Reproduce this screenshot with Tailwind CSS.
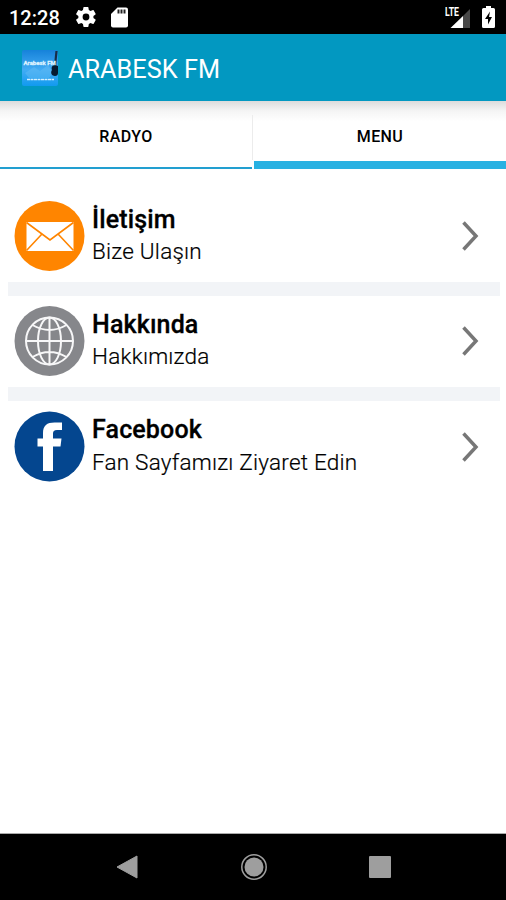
<!DOCTYPE html>
<html lang="tr">
<head>
<meta charset="utf-8">
<title>Arabesk FM</title>
<script src="https://cdn.jsdelivr.net/npm/@tailwindcss/browser@4"></script>
</head>
<body class="bg-white">
<div class="flex h-[900px] w-[506px] flex-col overflow-hidden bg-white font-['Roboto',sans-serif] text-black">
  <div class="flex h-[34px] shrink-0 items-center bg-black pl-[9px] pr-[11px] text-white">
    <span class="w-[67px] whitespace-nowrap pt-px text-[20px] leading-none font-medium">12:28</span>
    <svg class="h-6 w-[20px]" viewBox="2 0 20 24" fill="currentColor"><path fill-rule="evenodd" d="M19.4 13c.1-.6.1-1.400 0-2l2.100-1.600c.2-.2.200-.4.100-.6l-2-3.500c-.1-.2-.4-.3-.6-.2l-2.500 1c-.5-.4-1.100-.7-1.700-1l-.4-2.600c0-.3-.2-.5-.5-.5h-4c-.2 0-.4.200-.5.500L9 5.100c-.6.3-1.200.6-1.700 1l-2.500-1c-.2-.1-.5 0-.6.2l-2 3.500c-.1.200-.1.500.1.600L4.400 11c-.1.600-.1 1.400 0 2l-2.100 1.600c-.2.200-.2.400-.1.600l2 3.500c.1.200.4.300.6.200l2.500-1c.5.400 1.100.7 1.700 1l.4 2.600c.1.300.3.500.5.500h4c.3 0 .5-.2.500-.5l.4-2.600c.6-.3 1.200-.6 1.700-1l2.500 1c.2.100.5 0 .6-.2l2-3.500c.1-.2.100-.4-.1-.6zM12 15.400a3.400 3.400 0 1 1 0-6.800 3.400 3.400 0 0 1 0 6.800z"/></svg>
    <svg class="ml-[15px] h-[21px] w-[17px]" viewBox="0 0 17 21"><path fill="#fff" d="M6.500.5H15a2 2 0 0 1 2 2v16a2 2 0 0 1-2 2H2a2 2 0 0 1-2-2V7z"/><path fill="#222" d="M6.500 2.500h2v4h-2zM9.500 2.500h2v4h-2zM12.500 2.500h2v4h-2z"/></svg>
    <svg class="ml-auto h-[24px] w-[27px]" viewBox="0 0 27 24"><path fill="#484848" d="M25 4v19h-7V11z"/><path fill="#fff" d="M18 11v12H5.500z"/><text x="0" y="11" textLength="14" lengthAdjust="spacingAndGlyphs" font-family="Roboto" font-weight="700" font-size="12" fill="#fff">LTE</text></svg>
    <svg class="ml-[10px] h-[22px] w-[13px]" viewBox="0 0 13 22"><path fill="#fff" d="M4 0h5v2h2.500A1.500 1.500 0 0 1 13 3.500v17a1.500 1.500 0 0 1-1.500 1.500h-10A1.500 1.500 0 0 1 0 20.500v-17A1.500 1.500 0 0 1 1.500 2H4z"/><path fill="#000" d="M8 5.500 3 13h3v5.500L10 11H7z"/></svg>
  </div>

  <header class="flex h-[67px] shrink-0 items-center bg-[#0298c1] pl-[22px] text-white">
    <svg class="h-[36px] w-[36px]" viewBox="0 0 36 36">
      <defs><linearGradient id="logo" x2="0" y2="1"><stop stop-color="#1682da"/><stop offset=".55" stop-color="#42acf4"/><stop offset="1" stop-color="#119aef"/></linearGradient></defs>
      <rect width="36" height="36" rx="2" fill="url(#logo)"/>
      <path d="m3 23 9-6 6 4 8-6 5 8-4 5H7z" fill="#65bcf5" opacity=".45"/>
      <path d="M34.500 1 33 16" stroke="#172d48" stroke-width="2.200"/><path d="M33 15c-3 0-4 3-3 5-2 3 0 6 3 6 2 0 3-1 3-3v-7z" fill="#051a30"/>
      <text x="1.500" y="14.500" font-family="Roboto" font-weight="700" font-size="6" fill="#dcf2ff" stroke="#dcf2ff" stroke-width=".3">Arabesk FM</text>
      <path d="M5 29.500h27" stroke="#d6f0ff" stroke-width="1.500" stroke-dasharray="3 .5"/>
    </svg>
    <h1 class="ml-[10px] whitespace-nowrap pt-[5px] text-[25.300px] leading-none">ARABESK FM</h1>
  </header>

  <nav class="flex h-[68px] shrink-0 bg-linear-to-b from-[#dcdcdc] from-0% via-[#f5f5f5] via-15% to-white to-30% text-[16px] leading-none font-medium tracking-[0.400px]">
    <div class="flex w-[252px] justify-center border-b-2 border-[#229fd0] pt-[28px]">RADYO</div>
    <div class="mt-[14px] mr-px h-[45px] w-px bg-[#ececec]"></div>
    <div class="flex w-[252px] justify-center border-b-[8px] border-[#28b1e2] pt-[28px]">MENU</div>
  </nav>

  <main class="flex flex-1 flex-col pt-[22px] pr-[6px] pl-[8px]">
    <section class="flex h-[105px] shrink-0 items-start border-b-[14px] border-[#f2f4f7] pl-[6px]">
      <svg class="mt-[9px] h-[71px] w-[71px]" viewBox="0 0 71 71"><circle cx="35.500" cy="36" r="35" fill="#ff8500"/><rect x="12.500" y="22" width="47" height="29" fill="#fff"/><path d="m12.500 22.500 23.500 17.500L59.500 22.500M12.500 50.500l15-16M59.500 50.500l-15-16" fill="none" stroke="#ff8500" stroke-width="1.600"/></svg>
      <div class="ml-[7px] whitespace-nowrap pt-[14px]"><h2 class="text-[25px] leading-[30px] font-medium tracking-[0.150px] [-webkit-text-stroke:0.300px_black]">İletişim</h2><p class="text-[22.500px] leading-[33px] font-light tracking-[0.220px] [-webkit-text-stroke:0.200px_black]">Bize Ulaşın</p></div>
      <svg class="mt-[29px] mr-[21px] ml-auto h-[32px] w-[18px]" viewBox="0 0 18 32" fill="none" stroke="#777" stroke-width="3.500"><path d="m2.500 2.500 12.500 13.500L2.500 29.500"/></svg>
    </section>
    <section class="flex h-[105px] shrink-0 items-start border-b-[14px] border-[#f2f4f7] pl-[6px]">
      <svg class="mt-[9px] h-[71px] w-[71px]" viewBox="0 0 71 71"><circle cx="35.500" cy="36" r="35" fill="#86878b"/><g fill="none" stroke="#f7f7f8" stroke-width="2"><circle cx="35.500" cy="36" r="23.500"/><ellipse cx="35.500" cy="36" rx="11.500" ry="23.500"/><path d="M12 36h47M35.500 12.500v47M18.500 20q17 10 34 0M18.500 52q17-10 34 0"/></g></svg>
      <div class="ml-[7px] whitespace-nowrap pt-[14px]"><h2 class="text-[25px] leading-[30px] font-medium tracking-[0.150px] [-webkit-text-stroke:0.300px_black]">Hakkında</h2><p class="text-[22.500px] leading-[33px] font-light tracking-[0.220px] [-webkit-text-stroke:0.200px_black]">Hakkımızda</p></div>
      <svg class="mt-[29px] mr-[21px] ml-auto h-[32px] w-[18px]" viewBox="0 0 18 32" fill="none" stroke="#777" stroke-width="3.500"><path d="m2.500 2.500 12.500 13.500L2.500 29.500"/></svg>
    </section>
    <section class="flex h-[105px] shrink-0 items-start pl-[6px]">
      <svg class="mt-[10px] h-[71px] w-[71px]" viewBox="0 0 71 71"><circle cx="35.500" cy="35.500" r="35" fill="#04468f"/><path fill="#fff" d="M29 60V35.500h-5.500v-8H29V22c0-7.500 4-10.500 11.500-10.500H48V19h-5c-3 0-4 1.200-4 3.500v5h8.500l-1 8H39V60z"/></svg>
      <div class="ml-[7px] whitespace-nowrap pt-[14px]"><h2 class="text-[25px] leading-[30px] font-medium tracking-[0.150px] [-webkit-text-stroke:0.300px_black]">Facebook</h2><p class="pt-px text-[22.500px] leading-[33px] font-light tracking-[0.220px] [-webkit-text-stroke:0.200px_black]">Fan Sayfamızı Ziyaret Edin</p></div>
      <svg class="mt-[30px] mr-[21px] ml-auto h-[32px] w-[18px]" viewBox="0 0 18 32" fill="none" stroke="#777" stroke-width="3.500"><path d="m2.500 2.500 12.500 13.500L2.500 29.500"/></svg>
    </section>
  </main>

  <footer class="flex h-[67px] shrink-0 items-center justify-between border-t border-[#aaa] bg-black pr-[115px] pl-[116px]">
    <svg class="h-[26px] w-[22px]" viewBox="0 0 22 26" fill="#9e9e9e" stroke="#9e9e9e" stroke-linejoin="round"><path d="M21 2v22L1 13z"/></svg>
    <svg class="h-[28px] w-[28px]" viewBox="0 0 28 28"><circle cx="14" cy="14" r="12.200" fill="none" stroke="#9e9e9e" stroke-width="1.500"/><circle cx="14" cy="14" r="9.500" fill="#9e9e9e"/></svg>
    <div class="h-[22px] w-[22px] rounded-[1px] bg-[#9e9e9e]"></div>
  </footer>
</div>
</body>
</html>
